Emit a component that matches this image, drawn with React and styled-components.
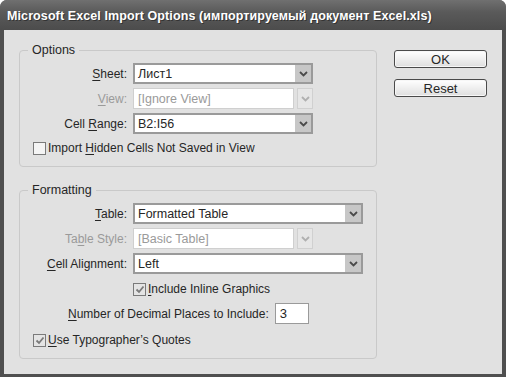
import React from 'react';
import styled, { createGlobalStyle } from 'styled-components';

const GlobalStyle = createGlobalStyle`
  html, body {
    margin: 0;
    padding: 0;
    background: #ffffff;
  }
  body {
    font-family: "Liberation Sans", Arial, sans-serif;
    font-size: 12px;
    color: #262626;
  }
`;

const Window = styled.div`
  width: 506px;
  height: 377px;
  box-sizing: border-box;
  display: flex;
  flex-direction: column;
  background: #4f4f4f;
  border-radius: 7px 7px 0 0;
  padding: 0 4px 3px 4px;
  overflow: hidden;
`;

const TitleBar = styled.div`
  height: 30px;
  flex: none;
  display: flex;
  align-items: center;
  margin: 0 -4px;
  padding: 1px 0 0 7px;
  box-sizing: border-box;
  background: linear-gradient(#707070, #5a5a5a 40%, #4c4c4c);
  color: #ffffff;
  font-weight: bold;
  font-size: 12.5px;
  letter-spacing: 0.1px;
  text-shadow: 1px 1px 0 #333;
`;

const Body = styled.div`
  flex: 1;
  display: flex;
  align-items: flex-start;
  gap: 17px;
  background: #e1e1e1;
  padding: 20px 15px 0 15px;
`;

const Groups = styled.div`
  display: flex;
  flex-direction: column;
  gap: 23px;
  width: 358px;
`;

const Group = styled.div`
  position: relative;
  border: 1px solid #c9c9c9;
  border-radius: 4px;
  display: flex;
  flex-direction: column;
  padding: ${({ $pad }) => $pad};
`;

const Legend = styled.span`
  position: absolute;
  top: -8px;
  left: 8px;
  padding: 0 4px;
  background: #e1e1e1;
  line-height: 15px;
  font-size: 12.5px;
`;

const FieldRow = styled.div`
  display: flex;
  align-items: center;
  height: 21px;
  margin-top: ${({ $mt }) => $mt || 0}px;
`;

const Label = styled.label`
  width: 107px;
  text-align: right;
  padding-right: 6px;
  white-space: nowrap;
  color: ${({ $disabled }) => ($disabled ? '#9a9a9a' : '#262626')};
`;

const Key = styled.u`
  text-decoration: underline;
  text-underline-offset: 2px;
`;

const SelectBox = styled.div`
  width: ${({ $w }) => $w}px;
  height: 21px;
  box-sizing: border-box;
  display: flex;
  gap: ${({ $disabled }) => ($disabled ? 3 : 0)}px;
  border: ${({ $disabled }) => ($disabled ? 'none' : '2px solid #9a9a9a')};
  background: ${({ $disabled }) => ($disabled ? 'transparent' : '#ffffff')};
`;

const SelectValue = styled.div`
  flex: 1;
  display: flex;
  align-items: center;
  padding-left: ${({ $disabled }) => ($disabled ? 4 : 3)}px;
  background: #ffffff;
  font-size: 12.5px;
  color: ${({ $disabled }) => ($disabled ? '#9a9a9a' : '#262626')};
  border: ${({ $disabled }) => ($disabled ? '1px solid #cfcfcf' : 'none')};
  box-sizing: border-box;
`;

const DropButton = styled.div`
  width: 16px;
  flex: none;
  display: flex;
  align-items: center;
  justify-content: center;
  box-sizing: border-box;
  background: ${({ $disabled }) => ($disabled ? '#e6e6e6' : '#c7c7c7')};
  border: ${({ $disabled }) => ($disabled ? '1px solid #d0d0d0' : 'none')};
`;

const CheckRow = styled.div`
  display: flex;
  align-items: center;
  height: 16px;
  margin-top: ${({ $mt }) => $mt || 0}px;
  padding-left: ${({ $pl }) => $pl}px;
`;

const Box = styled.span`
  width: 13px;
  height: 13px;
  box-sizing: border-box;
  border: 1px solid #7a7a7a;
  background: ${({ $checked }) => ($checked ? '#e4e4e4' : '#f4f4f4')};
  margin-right: 2px;
  display: flex;
  align-items: center;
  justify-content: center;
`;

const NumberRow = styled.div`
  display: flex;
  align-items: center;
  height: 21px;
  margin-top: 6px;
  padding-left: 48px;
`;

const NumberInput = styled.div`
  width: 34px;
  height: 21px;
  box-sizing: border-box;
  margin-left: 6px;
  border: 1px solid #9a9a9a;
  background: #ffffff;
  display: flex;
  align-items: center;
  padding-left: 4px;
  font-size: 13px;
`;

const Buttons = styled.div`
  display: flex;
  flex-direction: column;
  gap: 11px;
  width: 93px;
`;

const Button = styled.button`
  height: 18px;
  box-sizing: border-box;
  border: 1px solid #4a4a4a;
  border-radius: 3px;
  background: linear-gradient(#ffffff, #efefef 50%, #dedede);
  font-family: "Liberation Sans", Arial, sans-serif;
  font-size: 13px;
  color: #262626;
  padding: 0;
  box-shadow: inset 0 0 0 1px #f7f7f7;
`;

const Chevron = ({ disabled }) => (
  <svg width="9" height="6" viewBox="0 0 9 6">
    <path
      d="M1 1 L4.5 4.5 L8 1"
      fill="none"
      stroke={disabled ? '#b0b0b0' : '#4a4a4a'}
      strokeWidth="1.8"
    />
  </svg>
);

const Tick = () => (
  <svg width="10" height="9" viewBox="0 0 10 9">
    <path d="M1.5 4.5 L4 7 L8.5 1.5" fill="none" stroke="#7a7a7a" strokeWidth="1.8" />
  </svg>
);

const Select = ({ width, value, disabled }) => (
  <SelectBox $w={width} $disabled={disabled}>
    <SelectValue $disabled={disabled}>{value}</SelectValue>
    <DropButton $disabled={disabled}>
      <Chevron disabled={disabled} />
    </DropButton>
  </SelectBox>
);

const Checkbox = ({ checked, children, pl, mt }) => (
  <CheckRow $pl={pl} $mt={mt}>
    <Box $checked={checked}>{checked && <Tick />}</Box>
    <span>{children}</span>
  </CheckRow>
);

export default function App() {
  return (
    <>
      <GlobalStyle />
      <Window>
        <TitleBar>Microsoft Excel Import Options (импортируемый документ Excel.xls)</TitleBar>
        <Body>
          <Groups>
            <Group $pad="12px 0 10px 0">
              <Legend>Options</Legend>
              <FieldRow>
                <Label><Key>S</Key>heet:</Label>
                <Select width={180} value="Лист1" />
              </FieldRow>
              <FieldRow $mt={4}>
                <Label $disabled><Key>V</Key>iew:</Label>
                <Select width={180} value="[Ignore View]" disabled />
              </FieldRow>
              <FieldRow $mt={4}>
                <Label>Cell <Key>R</Key>ange:</Label>
                <Select width={180} value="B2:I56" />
              </FieldRow>
              <Checkbox pl={13} mt={6}>
                Import <Key>H</Key>idden Cells Not Saved in View
              </Checkbox>
            </Group>
            <Group $pad="12px 0 10px 0">
              <Legend>Formatting</Legend>
              <FieldRow>
                <Label><Key>T</Key>able:</Label>
                <Select width={230} value="Formatted Table" />
              </FieldRow>
              <FieldRow $mt={4}>
                <Label $disabled>Ta<Key>b</Key>le Style:</Label>
                <Select width={180} value="[Basic Table]" disabled />
              </FieldRow>
              <FieldRow $mt={4}>
                <Label><Key>C</Key>ell Alignment:</Label>
                <Select width={230} value="Left" />
              </FieldRow>
              <Checkbox checked pl={113} mt={7}>
                <Key>I</Key>nclude Inline Graphics
              </Checkbox>
              <NumberRow>
                <span><Key>N</Key>umber of Decimal Places to Include:</span>
                <NumberInput>3</NumberInput>
              </NumberRow>
              <Checkbox checked pl={13} mt={8}>
                <Key>U</Key>se Typographer’s Quotes
              </Checkbox>
            </Group>
          </Groups>
          <Buttons>
            <Button>OK</Button>
            <Button>Reset</Button>
          </Buttons>
        </Body>
      </Window>
    </>
  );
}
